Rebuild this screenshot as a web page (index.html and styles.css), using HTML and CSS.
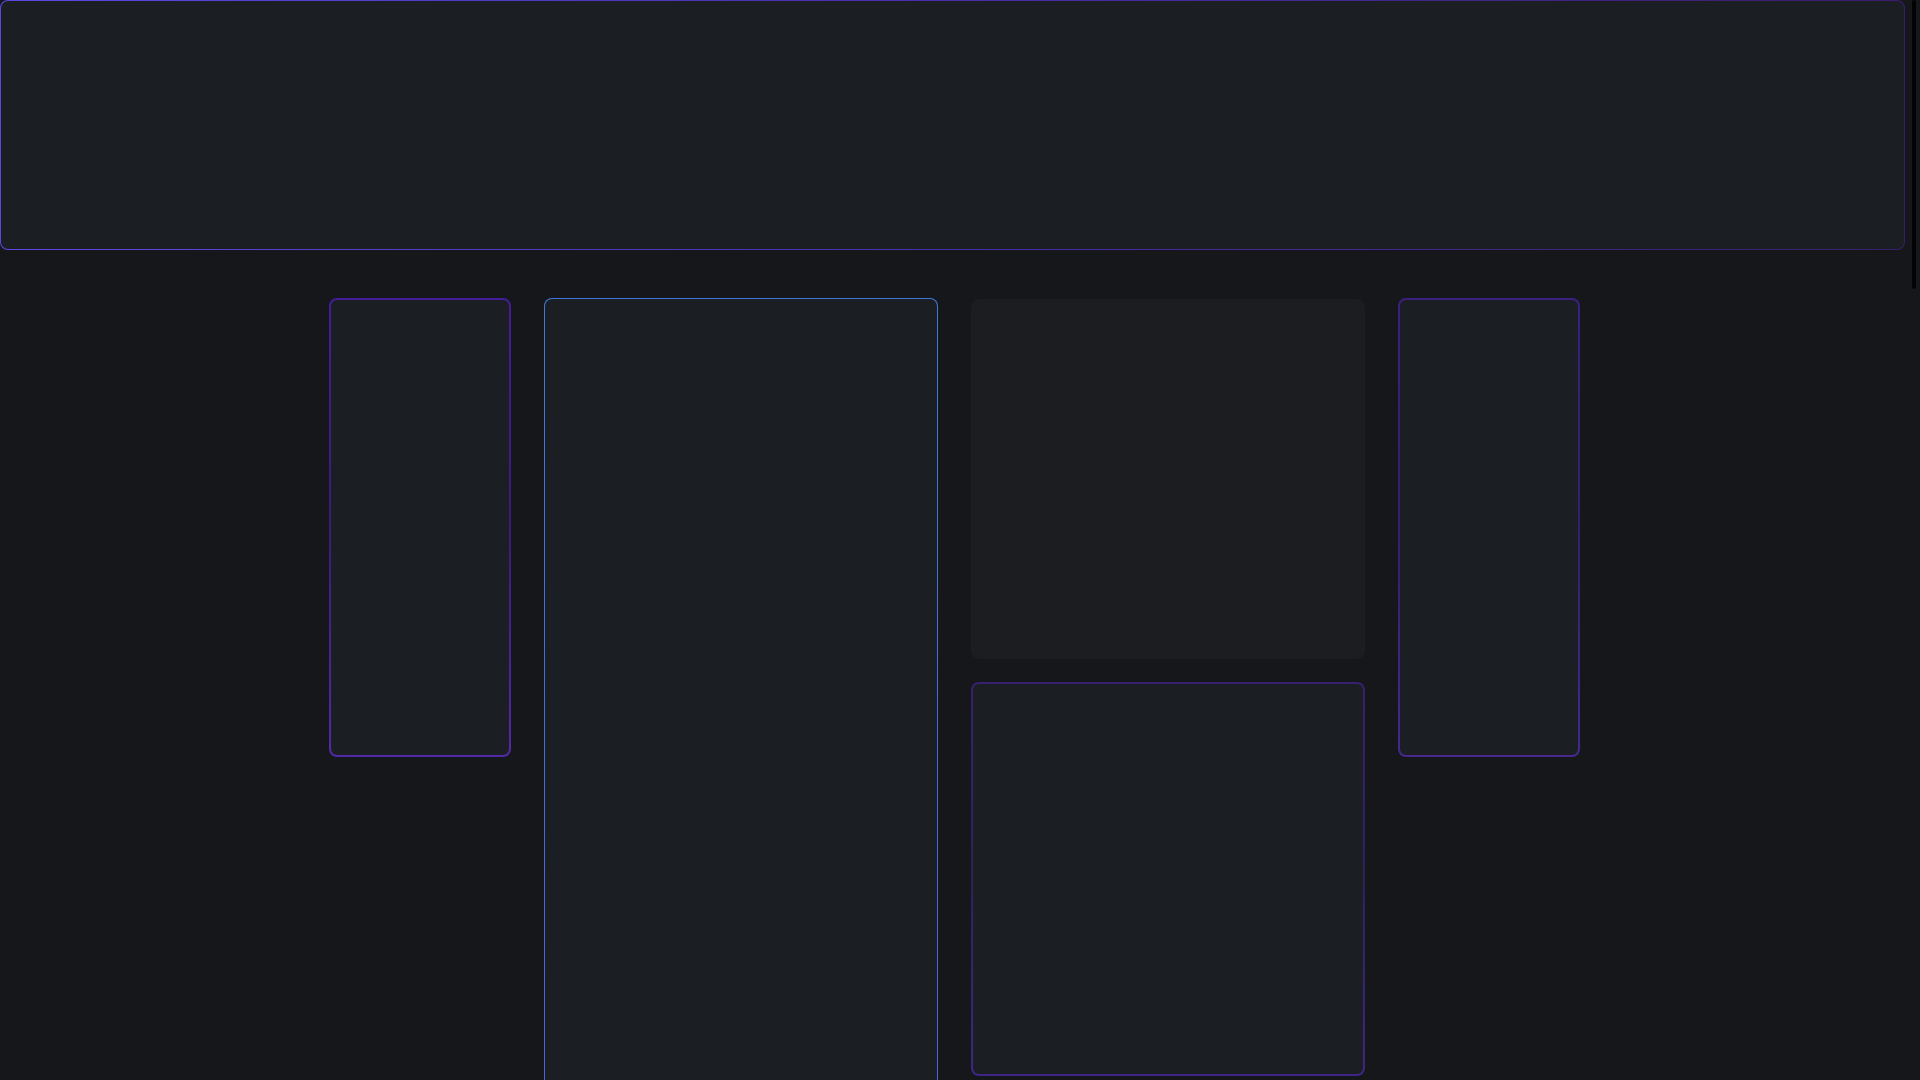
FILE: index.html
```html
<!DOCTYPE html>
<html lang="en">
<head>
<meta charset="utf-8">
<title>Dashboard</title>
<link rel="stylesheet" href="styles.css">
</head>
<body>
  <div class="shell">
    <div class="page">
      <header class="hero"></header>
      <main class="board">
        <section class="col col-narrow">
          <div class="card card-side"></div>
        </section>
        <section class="col col-wide">
          <div class="card card-tall"></div>
        </section>
        <section class="col col-wide col-stack">
          <div class="card card-plain"></div>
          <div class="card card-square"></div>
        </section>
        <section class="col col-narrow">
          <div class="card card-side card-side-dim"></div>
        </section>
      </main>
    </div>
    <div class="rail" aria-hidden="true"><div class="rail-thumb"></div></div>
  </div>
</body>
</html>
```

FILE: styles.css
```css
html, body {
  margin: 0;
  padding: 0;
  height: 100%;
  overflow: hidden;
  background: #16171b;
  font-family: "Inter", "Liberation Sans", sans-serif;
}

.shell {
  display: flex;
  height: 100vh;
}

.page {
  flex: 1;
  min-width: 0;
  height: 100vh;
  overflow: hidden;
  background: #16171b;
}

.rail {
  width: 15px;
  flex: none;
  display: flex;
  justify-content: flex-start;
  padding-left: 7px;
  box-sizing: border-box;
  background: #16171b;
}
.rail-thumb {
  width: 4px;
  height: 289px;
  border-radius: 2px;
  background: #030304;
}

.hero {
  box-sizing: border-box;
  height: 250px;
  border: 1px solid transparent;
  border-radius: 8px;
  background:
    linear-gradient(#1b1e23, #1b1e23) padding-box,
    linear-gradient(90deg, #5a48e2 0%, #4a2fb0 45%, #3a1d6a 100%) border-box;
}

.board {
  display: flex;
  justify-content: center;
  align-items: flex-start;
  gap: 33px;
  padding: 48px 0 48px;
  margin-left: 3px;
}

.col {
  display: flex;
  flex-direction: column;
}
.col-narrow { width: 182px; }
.col-wide { width: 394px; }
.col-stack { gap: 23px; }

.card {
  box-sizing: border-box;
  border-radius: 8px;
  background: #1b1e23;
}

.card-side {
  height: 459px;
  border: 2px solid transparent;
  background:
    linear-gradient(#1b1e23, #1b1e23) padding-box,
    linear-gradient(180deg, #441c98 0%, #3a1c7a 50%, #5229a8 100%) border-box;
}
.card-side-dim {
  background:
    linear-gradient(#1b1e23, #1b1e23) padding-box,
    linear-gradient(180deg, #3b2080 0%, #341f6c 50%, #46288f 100%) border-box;
}

.card-tall {
  height: 3690px;
  border: 1px solid transparent;
  background:
    linear-gradient(#1b1e23, #1b1e23) padding-box,
    linear-gradient(180deg, #3f78d8 0%, #4d64dc 20%, #5a56e4 100%) border-box;
}

.card-plain {
  height: 360px;
  background: #1c1d21;
  border: 1px solid #1c1d21;
  margin-top: 1px;
}

.card-square {
  height: 394px;
  border: 2px solid transparent;
  background:
    linear-gradient(#1b1e23, #1b1e23) padding-box,
    linear-gradient(180deg, #38206e 0%, #31205c 50%, #3f2585 100%) border-box;
}
```
